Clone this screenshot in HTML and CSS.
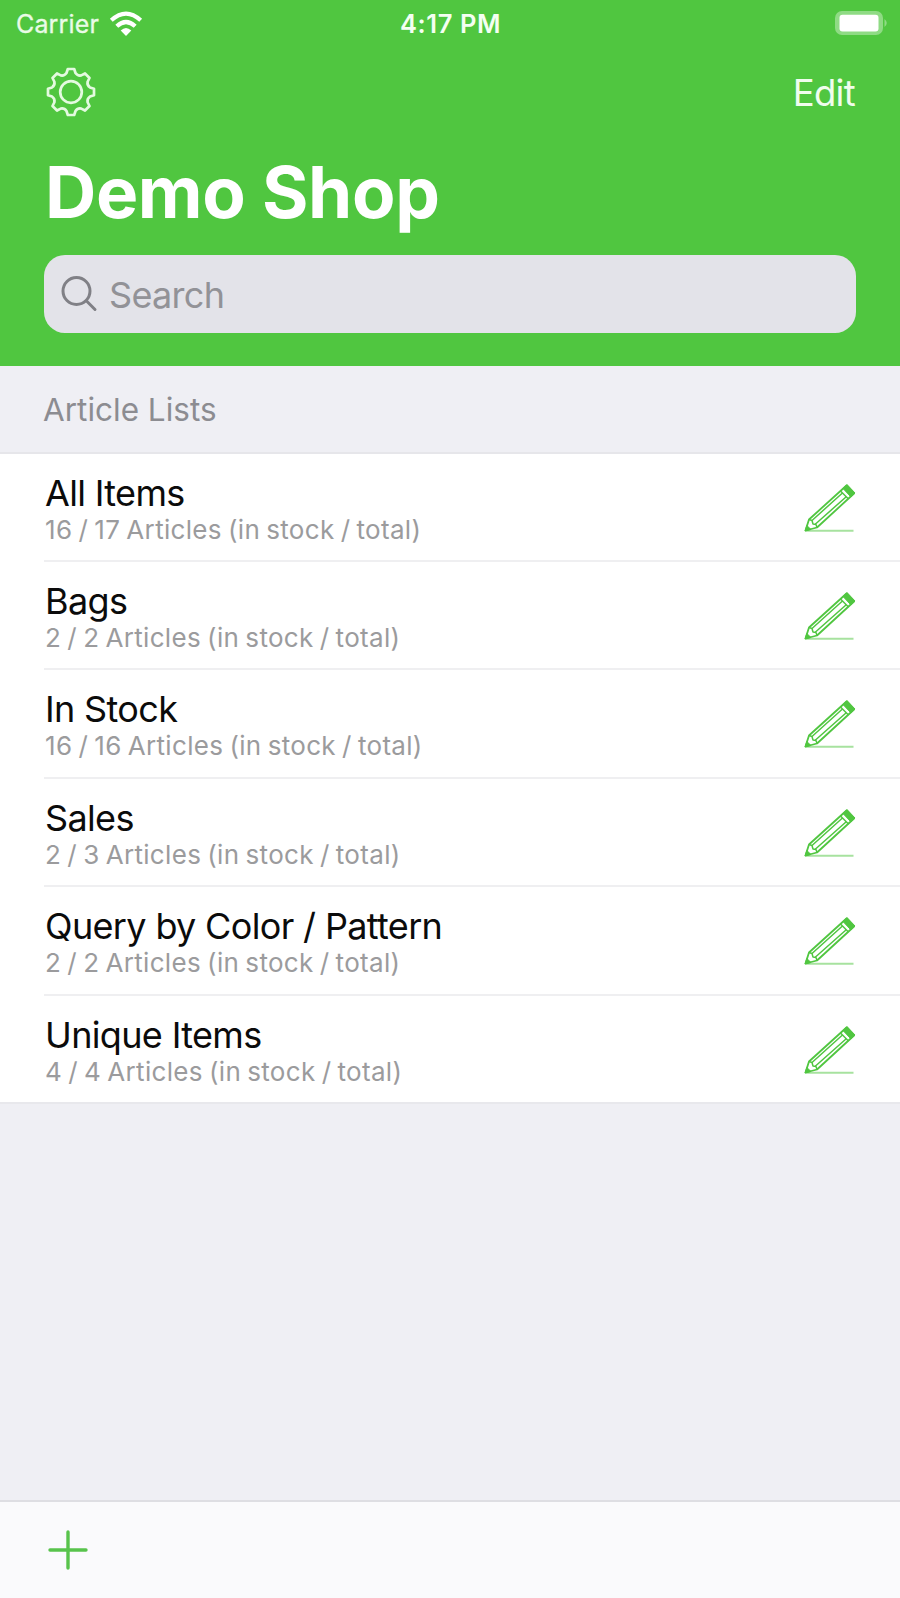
FILE: index.html
```html
<!DOCTYPE html>
<html lang="en">
<head>
<meta charset="utf-8">
<title>Demo Shop</title>
<link rel="stylesheet" href="styles.css">
</head>
<body>
<svg class="defs" width="0" height="0">
  <symbol id="pencil" viewBox="0 0 60 60">
    <path d="M6 49.700H53.500" stroke-width="2" opacity=".5"/>
    <path d="M5.500 49.500L9 38.500L46.500 4.500L54 12.500L17 46.500Z" stroke-width="1.800"/>
    <path d="M9 38.500L12 39.500L13 43L16 43.500L17 46.500M12 39.500L43 11.500M15.500 43L46.500 15.500M40.500 10L48.500 18" stroke-width="1.500"/>
    <path class="solid" d="M43 7.500L47 3.500L55 12L51 16ZM5 50L6.800 44.500L11 48.500Z" stroke-width="1"/>
  </symbol>
</svg>
<header class="header">
  <div class="status">
    <div class="network">
      <span class="carrier">Carrier</span>
      <svg class="wifi" viewBox="0 0 34 28">
        <path class="arc" d="M2.300 10.300Q17 -3 31.700 10.300M7.800 16.300Q17 7.700 26.200 16.300"/>
        <path class="dot" d="M11.700 20.500Q17 15.500 22.300 20.500L17 26Z"/>
      </svg>
    </div>
    <span class="time">4:17 PM</span>
    <svg class="battery" viewBox="0 0 56 26">
      <rect class="shell" x="1" y="1" width="48" height="24" rx="7"/>
      <path class="shell" d="M50.500 9Q55 13 50.500 17Z"/>
      <rect class="charge" x="5.500" y="4.700" width="39" height="16.800" rx="3"/>
    </svg>
  </div>
  <nav class="nav">
    <svg class="gear" viewBox="-26 -26 52 52">
      <path d="M-4.500 -19L-3.200 -23H3.200L4.500 -19Q6.600 -15.900 10.250 -16.600L14 -18.500L18.500 -14L16.600 -10.250Q15.900 -6.600 19 -4.500L23 -3.200V3.200L19 4.500Q15.900 6.600 16.600 10.250L18.500 14L14 18.500L10.250 16.600Q6.600 15.900 4.500 19L3.200 23H-3.200L-4.500 19Q-6.600 15.900 -10.250 16.600L-14 18.500L-18.500 14L-16.600 10.250Q-15.900 6.600 -19 4.500L-23 3.200V-3.200L-19 -4.500Q-15.900 -6.600 -16.600 -10.250L-18.500 -14L-14 -18.500L-10.250 -16.600Q-6.600 -15.900 -4.500 -19Z"/>
      <circle r="10.800"/>
    </svg>
    <span class="edit">Edit</span>
  </nav>
  <h1 class="title">Demo Shop</h1>
  <div class="search">
    <svg class="lens" viewBox="0 0 38 38"><circle cx="16.500" cy="16" r="13.500"/><path d="M26.300 25.800L35 34.500"/></svg>
    <span class="placeholder">Search</span>
  </div>
</header>
<main class="content">
  <h2 class="section">Article Lists</h2>
  <ul class="list">
    <li class="row"><div class="cell"><div><div class="name">All Items</div><div class="count">16 / 17 Articles (in stock / total)</div></div><svg class="pencil"><use href="#pencil"/></svg></div></li>
    <li class="row"><div class="cell"><div><div class="name">Bags</div><div class="count">2 / 2 Articles (in stock / total)</div></div><svg class="pencil"><use href="#pencil"/></svg></div></li>
    <li class="row"><div class="cell"><div><div class="name">In Stock</div><div class="count">16 / 16 Articles (in stock / total)</div></div><svg class="pencil"><use href="#pencil"/></svg></div></li>
    <li class="row"><div class="cell"><div><div class="name">Sales</div><div class="count">2 / 3 Articles (in stock / total)</div></div><svg class="pencil"><use href="#pencil"/></svg></div></li>
    <li class="row"><div class="cell"><div><div class="name">Query by Color / Pattern</div><div class="count">2 / 2 Articles (in stock / total)</div></div><svg class="pencil"><use href="#pencil"/></svg></div></li>
    <li class="row"><div class="cell"><div><div class="name">Unique Items</div><div class="count">4 / 4 Articles (in stock / total)</div></div><svg class="pencil"><use href="#pencil"/></svg></div></li>
  </ul>
</main>
<footer class="toolbar">
  <svg class="plus" viewBox="0 0 40 40"><path d="M20 2V38M2 20H38"/></svg>
</footer>
</body>
</html>
```
FILE: styles.css
```css
* { box-sizing: border-box; }
body {
  margin: 0;
  width: 900px;
  height: 1598px;
  display: flex;
  flex-direction: column;
  overflow: hidden;
  background: #efeff4;
  font-family: Inter, "Liberation Sans", sans-serif;
  white-space: nowrap;
}
.defs { position: absolute; }
.header { height: 366px; flex: none; background: #50c640; color: #fff; }
.status {
  height: 48px;
  padding: 0 10px 0 16px;
  display: grid;
  grid-template-columns: 384px 1fr 56px;
  align-items: center;
}
.network { display: flex; align-items: center; gap: 10px; }
.carrier { width: 83px; font-size: 25px; letter-spacing: 0.15px; color: #e9fbe6; -webkit-text-stroke: 0.3px; }
.wifi { width: 34px; height: 28px; }
.arc { fill: none; stroke: #fff; stroke-width: 4.2; }
.dot, .charge { fill: #fff; }
.time { margin-top: -1px; font-size: 25.5px; font-weight: 600; letter-spacing: 0.6px; color: #f4fff2; }
.battery { width: 56px; height: 26px; margin-bottom: 2px; }
.shell { fill: #8fdb84; }
.nav {
  height: 88px;
  padding: 0 45px;
  display: flex;
  align-items: center;
  justify-content: space-between;
}
.gear { width: 52px; height: 52px; fill: none; stroke: #e4fae0; stroke-width: 2.7; stroke-linejoin: round; }
.edit { padding-top: 1px; font-size: 36.5px; letter-spacing: -0.7px; color: #f0fdee; }
.title { margin: 0; padding-left: 45px; line-height: 113px; font-size: 71px; font-weight: 700; letter-spacing: -0.35px; }
.search {
  margin: 6px 44px 0;
  height: 78px;
  padding: 0 16px;
  display: flex;
  align-items: center;
  gap: 11px;
  border-radius: 21px;
  background: #e3e3e9;
}
.lens { width: 38px; height: 38px; fill: none; stroke: #808086; stroke-width: 3; stroke-linecap: round; }
.placeholder { padding-top: 1px; font-size: 36px; letter-spacing: -0.7px; color: #929297; }
.content { flex: 1; }
.section {
  margin: 0;
  height: 87.6px;
  padding-left: 43px;
  border-bottom: 2px solid #e6e6ea;
  line-height: 87px;
  font-size: 31.5px;
  font-weight: 400;
  color: #8c8c91;
}
.list { margin: 0; padding: 0; list-style: none; background: #fff; border-bottom: 2px solid #e8e8ec; }
.row { height: 108.4px; padding-left: 44px; }
.row:last-child { height: 106.4px; }
.cell {
  height: 100%;
  padding: 21px 40px 0 1px;
  display: flex;
  justify-content: space-between;
  border-bottom: 2px solid #efeff1;
}
.row:last-child .cell { border-bottom: 0; }
.name { line-height: 36px; font-size: 36px; letter-spacing: -0.65px; color: #0b0b0b; }
.count {
  line-height: 38px;
  font-size: 26px;
  letter-spacing: 0.32px;
  word-spacing: -1.5px;
  color: #9b9b9d;
}
.pencil { width: 60px; height: 60px; margin-top: 6px; fill: none; stroke: #50c640; stroke-linejoin: round; }
.solid { fill: #50c640; }
.toolbar { height: 98px; flex: none; padding: 28px 48px; border-top: 2px solid #dedee3; background: #fafafc; }
.plus { display: block; width: 40px; height: 40px; fill: none; stroke: #58c34c; stroke-width: 3.4; stroke-linecap: round; }
```
